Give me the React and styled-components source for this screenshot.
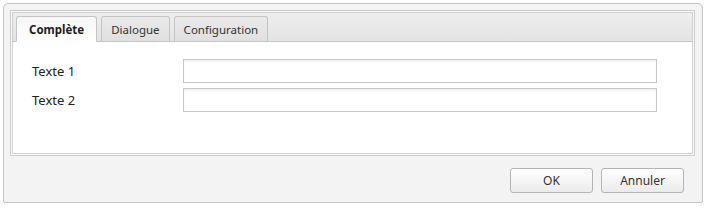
import styled, { createGlobalStyle } from "styled-components";
import { useState } from "react";

const GlobalStyle = createGlobalStyle`
  html, body {
    margin: 0;
    padding: 0;
    background: #ffffff;
  }
  body {
    font-family: "Noto Sans", "Open Sans", sans-serif;
    font-size: 12px;
    color: #222222;
  }
`;

const tabs = ["Complète", "Dialogue", "Configuration"];

export default function App() {
  const [active, setActive] = useState(0);

  return (
    <>
      <GlobalStyle />
      <Window>
        <Panel>
          <TabStrip>
            {tabs.map((t, i) => (
              <Tab key={t} $active={i === active} onClick={() => setActive(i)}>
                {t}
              </Tab>
            ))}
          </TabStrip>
          <Content>
            <Row>
              <Label>Texte 1</Label>
              <Field type="text" />
            </Row>
            <Row>
              <Label>Texte 2</Label>
              <Field type="text" />
            </Row>
          </Content>
        </Panel>
        <Footer>
          <Button>OK</Button>
          <Button>Annuler</Button>
        </Footer>
      </Window>
    </>
  );
}

const Window = styled.div`
  box-sizing: border-box;
  margin: 3px 0 0 3px;
  width: 700px;
  height: 200px;
  border: 1px solid #c4c4c4;
  border-radius: 5px 5px 2px 2px;
  background: #f3f3f3;
  padding: 6px 7px 0 6px;
  display: flex;
  flex-direction: column;
`;

const Panel = styled.div`
  box-sizing: border-box;
  height: 146px;
  border: 1px solid #cdcdcd;
  padding: 1px;
  background: #f7f7f7;
  display: flex;
  flex-direction: column;
`;

const TabStrip = styled.div`
  box-sizing: border-box;
  height: 30px;
  padding: 3px 0 0 3px;
  display: flex;
  gap: 4px;
  align-items: flex-end;
  background: linear-gradient(#eeeeee, #e3e3e3);
  border: 1px solid #d0d0d0;
  border-bottom: 1px solid #c6c6c6;
`;

const Tab = styled.div`
  box-sizing: border-box;
  height: 26px;
  margin-bottom: -1px;
  padding: 0 ${(p) => (p.$active ? "12px" : "9px")};
  display: flex;
  align-items: center;
  border: 1px solid #c4c4c4;
  border-bottom: ${(p) => (p.$active ? "1px solid #ffffff" : "1px solid #c6c6c6")};
  border-radius: 3px 3px 0 0;
  background: ${(p) =>
    p.$active ? "linear-gradient(#f6f6f6, #ffffff)" : "linear-gradient(#eaeaea, #e0e0e0)"};
  font-size: 11.5px;
  font-weight: ${(p) => (p.$active ? 700 : 400)};
  color: ${(p) => (p.$active ? "#1e1e1e" : "#333333")};
  cursor: pointer;
`;

const Content = styled.div`
  flex: 1;
  background: #ffffff;
  border: 1px solid #d4d4d4;
  border-top: none;
  padding: 17px 0 0 19px;
  display: flex;
  flex-direction: column;
  gap: 5px;
`;

const Row = styled.div`
  display: flex;
  align-items: center;
`;

const Label = styled.label`
  width: 151px;
  font-size: 13px;
  color: #222222;
`;

const Field = styled.input`
  box-sizing: border-box;
  width: 474px;
  height: 24px;
  margin: 0;
  border: 1px solid #c8c8c8;
  background: #ffffff;
  box-shadow: inset 0 2px 2px rgba(0, 0, 0, 0.05);
  outline: none;
`;

const Footer = styled.div`
  display: flex;
  justify-content: flex-end;
  gap: 8px;
  padding: 12px 11px 0 0;
`;

const Button = styled.button`
  box-sizing: border-box;
  width: 83px;
  height: 25px;
  border: 1px solid #b4b4b4;
  border-radius: 3px;
  background: linear-gradient(#ffffff, #ebebeb);
  font-family: "Noto Sans", "Open Sans", sans-serif;
  font-size: 12px;
  color: #333333;
  cursor: pointer;
`;
